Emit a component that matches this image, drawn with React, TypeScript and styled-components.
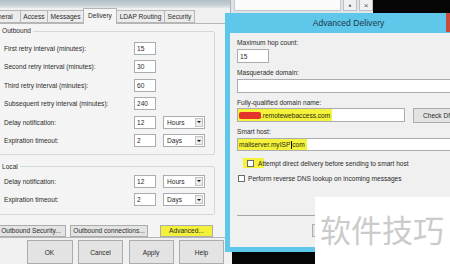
import React from 'react'
import styled, { createGlobalStyle } from 'styled-components'

const GlobalStyle = createGlobalStyle`
  html, body { margin: 0; padding: 0; background: #050505; }
  body { font-family: 'Liberation Sans', Arial, sans-serif; }
  * { box-sizing: border-box; }
`

const Desktop = styled.div`
  position: relative;
  width: 450px;
  height: 264px;
  overflow: hidden;
  background: #050505;
  font-size: 6.6px;
  color: #2b2b2b;
`

/* ---------- properties window (behind) ---------- */

const PropsWindow = styled.div`
  position: absolute;
  left: 0;
  top: 0;
  width: 232px;
  height: 264px;
  background: #f0f0f0;
  display: flex;
  flex-direction: column;
`

const TopStrip = styled.div`
  height: 10px;
  background: linear-gradient(#b3bec6, #c7d0d6 65%, #e4e8eb);
`

const TabRow = styled.div`
  display: flex;
  align-items: flex-end;
  height: 15px;
  margin-left: -19px;
  position: relative;
  z-index: 1;
`

const Tab = styled.div<{ $w: number; $active?: boolean }>`
  width: ${(p) => p.$w}px;
  height: ${(p) => (p.$active ? 16 : 13)}px;
  margin-bottom: ${(p) => (p.$active ? -1 : 0)}px;
  margin-right: -1px;
  border: 1px solid #b6b6b6;
  border-bottom: ${(p) => (p.$active ? 'none' : '1px solid #b6b6b6')};
  background: ${(p) => (p.$active ? '#f5f5f5' : '#ececec')};
  display: flex;
  align-items: center;
  justify-content: center;
  white-space: nowrap;
  padding-bottom: ${(p) => (p.$active ? 2 : 0)}px;
`

const Panel = styled.div`
  height: 219px;
  border: 1px solid #b6b6b6;
  border-left: none;
  background: #f4f4f4;
  padding-top: 3.5px;
  display: flex;
  flex-direction: column;
`

const Group = styled.fieldset<{ $top?: number }>`
  margin: ${(p) => p.$top ?? 0}px 0 0 -3px;
  width: 218px;
  padding: 0 0 0 6px;
  border: 1px solid #d2d9de;
  border-radius: 2px;
  min-inline-size: 0;
`

const Legend = styled.legend`
  padding: 0 2px;
  margin-left: -4px;
  line-height: 8px;
`

const Rows = styled.div<{ $pt: number; $pb: number }>`
  display: flex;
  flex-direction: column;
  padding: ${(p) => p.$pt}px 0 ${(p) => p.$pb}px;
`

const Row = styled.div`
  display: flex;
  align-items: center;
  height: 18.5px;
`

const RowLabel = styled.span`
  width: 130px;
  white-space: nowrap;
`

const NumField = styled.div`
  width: 22px;
  height: 13px;
  background: #fff;
  border: 1px solid #a9adb2;
  padding-left: 2px;
  display: flex;
  align-items: center;
`

const Select = styled.div`
  width: 42px;
  height: 13px;
  margin-left: 7px;
  background: #fff;
  border: 1px solid #a9adb2;
  padding: 0 1px 0 3px;
  display: flex;
  align-items: center;
  justify-content: space-between;
`

const Arrow = styled.span`
  width: 8px;
  height: 9px;
  border: 1px solid #c4c4c4;
  background: #ececec;
  display: flex;
  align-items: center;
  justify-content: center;
  &::after {
    content: '';
    border-left: 2px solid transparent;
    border-right: 2px solid transparent;
    border-top: 2.5px solid #111;
  }
`

const ButtonRow = styled.div`
  display: flex;
  margin: 10px 0 0 -4px;
`

const Button = styled.div<{ $w: number; $h?: number; $gap?: number; $hl?: boolean }>`
  width: ${(p) => p.$w}px;
  height: ${(p) => p.$h ?? 12.5}px;
  margin-left: ${(p) => p.$gap ?? 0}px;
  border: 1px solid #acacac;
  background: ${(p) => (p.$hl ? '#f4f13a' : '#e3e3e3')};
  display: flex;
  align-items: center;
  justify-content: center;
  white-space: nowrap;
  flex-shrink: 0;
`

const BottomRow = styled.div`
  display: flex;
  justify-content: flex-end;
  gap: 5.5px;
  margin-top: 2px;
  padding-right: 8px;
`

/* ---------- window peeking at the top ---------- */

const BackWindow = styled.div`
  position: absolute;
  left: 230px;
  top: 0;
  width: 143px;
  height: 13px;
  background: #dfe4e8;
  border-left: 1px solid #a8b3bb;
  display: flex;
  align-items: flex-start;
  gap: 2px;
  padding-left: 3px;
`

const BackField = styled.div`
  width: 108px;
  height: 11px;
  background: #fbfbfb;
  border: 1px solid #c3c9ce;
  border-top: none;
`

const MiniBtn = styled.div`
  width: 14px;
  height: 11px;
  background: #eef0f2;
  border: 1px solid #b9c0c6;
  border-top: none;
  display: flex;
  align-items: center;
  justify-content: center;
  font-size: 8px;
  color: #555;
`

/* ---------- Advanced Delivery dialog ---------- */

const Dialog = styled.div`
  position: absolute;
  left: 225px;
  top: 13px;
  width: 247px;
  height: 239px;
  background: #5ec7ea;
  display: flex;
  flex-direction: column;
`

const TitleBar = styled.div`
  height: 20px;
  display: flex;
  align-items: flex-start;
  padding-left: 26px;
`

const Title = styled.div`
  flex: 1;
  height: 20px;
  display: flex;
  align-items: center;
  justify-content: center;
  font-size: 8.6px;
  color: #1e3a4e;
`

const CloseBtn = styled.div`
  width: 26px;
  height: 19px;
  background: #c9493b;
`

const DialogBody = styled.div`
  flex: 1;
  margin: 0 0 5px 5px;
  background: #f0f0f0;
  padding: 6px 0 0 7px;
  display: flex;
  flex-direction: column;
`

const DLabel = styled.div<{ $mt: number }>`
  line-height: 8px;
  margin-top: ${(p) => p.$mt}px;
  white-space: nowrap;
`

const TextField = styled.div<{ $w: number; $h?: number; $mt?: number }>`
  width: ${(p) => p.$w}px;
  height: ${(p) => p.$h ?? 14}px;
  margin-top: ${(p) => p.$mt ?? 0}px;
  background: #fff;
  border: 1px solid #a9adb2;
  display: flex;
  align-items: stretch;
  flex-shrink: 0;
  white-space: nowrap;
`

const PlainText = styled.span`
  display: flex;
  align-items: center;
  padding-left: 2px;
`

const Highlight = styled.span`
  display: flex;
  align-items: center;
  padding: 0 2px 0 1px;
  background: #f5f23c;
  color: #2a2a10;
`

const Redact = styled.span`
  display: inline-block;
  width: 22px;
  height: 7px;
  border-radius: 2px;
  background: #e3332b;
`

const Caret = styled.span`
  display: inline-block;
  width: 1px;
  height: 8px;
  background: #111;
  margin: 0 0.5px;
`

const FieldRow = styled.div`
  display: flex;
  gap: 8px;
  margin-top: 1px;
`

const CheckRow = styled.div<{ $mt: number; $ml: number }>`
  display: flex;
  align-items: center;
  height: 10px;
  margin: ${(p) => p.$mt}px 0 0 ${(p) => p.$ml}px;
  white-space: nowrap;
`

const CheckHL = styled.span`
  display: flex;
  align-items: center;
  height: 10px;
  padding-left: 4px;
  background: #f5f23c;
  gap: 4px;
`

const Box = styled.span<{ $gap?: number }>`
  width: 7px;
  height: 7px;
  background: #fff;
  border: 1px solid #6b6b6b;
  margin-right: ${(p) => p.$gap ?? 0}px;
  flex-shrink: 0;
`

const Separator = styled.div`
  height: 1px;
  margin-top: 32px;
  background: #a5a5a5;
`

const DialogButtons = styled.div`
  display: flex;
  gap: 6px;
  margin-top: 8px;
  padding-left: 75px;
`

/* ---------- watermark ---------- */

const Watermark = styled.div`
  position: absolute;
  left: 315px;
  top: 197px;
  width: 135px;
  height: 67px;
  background: #fff;
  padding: 16px 0 0 5px;
  font-family: 'Noto Sans CJK SC', sans-serif;
  font-size: 31px;
  line-height: 31px;
  color: #cbcbcb;
  white-space: nowrap;
`

const outbound = [
  { label: 'First retry interval (minutes):', value: '15' },
  { label: 'Second retry interval (minutes):', value: '30' },
  { label: 'Third retry interval (minutes):', value: '60' },
  { label: 'Subsequent retry interval (minutes):', value: '240' },
  { label: 'Delay notification:', value: '12', unit: 'Hours' },
  { label: 'Expiration timeout:', value: '2', unit: 'Days' }
]

const local = [
  { label: 'Delay notification:', value: '12', unit: 'Hours' },
  { label: 'Expiration timeout:', value: '2', unit: 'Days' }
]

const tabs = [
  { name: 'General', w: 40 },
  { name: 'Access', w: 28 },
  { name: 'Messages', w: 37 },
  { name: 'Delivery', w: 34, active: true },
  { name: 'LDAP Routing', w: 49 },
  { name: 'Security', w: 31 }
]

type Setting = { label: string; value: string; unit?: string }

function SettingRows({ items }: { items: Setting[] }) {
  return (
    <>
      {items.map((item, i) => (
        <Row key={i}>
          <RowLabel>{item.label}</RowLabel>
          <NumField>{item.value}</NumField>
          {item.unit && (
            <Select>
              {item.unit}
              <Arrow />
            </Select>
          )}
        </Row>
      ))}
    </>
  )
}

export default function App() {
  return (
    <Desktop>
      <GlobalStyle />
      <PropsWindow>
        <TopStrip />
        <TabRow>
          {tabs.map((t) => (
            <Tab key={t.name} $w={t.w} $active={t.active}>
              {t.name}
            </Tab>
          ))}
        </TabRow>
        <Panel>
          <Group>
            <Legend>Outbound</Legend>
            <Rows $pt={3.75} $pb={3.5}>
              <SettingRows items={outbound} />
            </Rows>
          </Group>
          <Group $top={8.25}>
            <Legend>Local</Legend>
            <Rows $pt={1.25} $pb={4.5}>
              <SettingRows items={local} />
            </Rows>
          </Group>
          <ButtonRow>
            <Button $w={70}>Outbound Security...</Button>
            <Button $w={78} $gap={4}>Outbound connections...</Button>
            <Button $w={53} $gap={12} $hl>Advanced...</Button>
          </ButtonRow>
        </Panel>
        <BottomRow>
          <Button $w={46} $h={24}>OK</Button>
          <Button $w={45} $h={24}>Cancel</Button>
          <Button $w={45} $h={24}>Apply</Button>
          <Button $w={45} $h={24}>Help</Button>
        </BottomRow>
      </PropsWindow>

      <BackWindow>
        <BackField />
        <MiniBtn>▪</MiniBtn>
        <MiniBtn>×</MiniBtn>
      </BackWindow>

      <Dialog>
        <TitleBar>
          <Title>Advanced Delivery</Title>
          <CloseBtn />
        </TitleBar>
        <DialogBody>
          <DLabel $mt={0}>Maximum hop count:</DLabel>
          <TextField $w={32} $mt={2}>
            <PlainText>15</PlainText>
          </TextField>
          <DLabel $mt={6}>Masquerade domain:</DLabel>
          <TextField $w={240} $mt={2} />
          <DLabel $mt={6}>Fully-qualified domain name:</DLabel>
          <FieldRow>
            <TextField $w={168}>
              <Highlight>
                <Redact />
                .remotewebaccess.com
              </Highlight>
            </TextField>
            <Button $w={50} $h={15}>Check DN</Button>
          </FieldRow>
          <DLabel $mt={5}>Smart host:</DLabel>
          <TextField $w={240} $h={13} $mt={2}>
            <Highlight>
              mailserver.myISP
              <Caret />
              com
            </Highlight>
          </TextField>
          <CheckRow $mt={7} $ml={6}>
            <CheckHL>
              <Box />
              At
            </CheckHL>
            tempt direct delivery before sending to smart host
          </CheckRow>
          <CheckRow $mt={5} $ml={1}>
            <Box $gap={3} />
            Perform reverse DNS lookup on incoming messages
          </CheckRow>
          <Separator />
          <DialogButtons>
            {/* labels of these buttons are hidden under the watermark */}
            <Button $w={45} $h={13} />
            <Button $w={45} $h={13} />
          </DialogButtons>
        </DialogBody>
      </Dialog>

      <Watermark>软件技巧</Watermark>
    </Desktop>
  )
}
